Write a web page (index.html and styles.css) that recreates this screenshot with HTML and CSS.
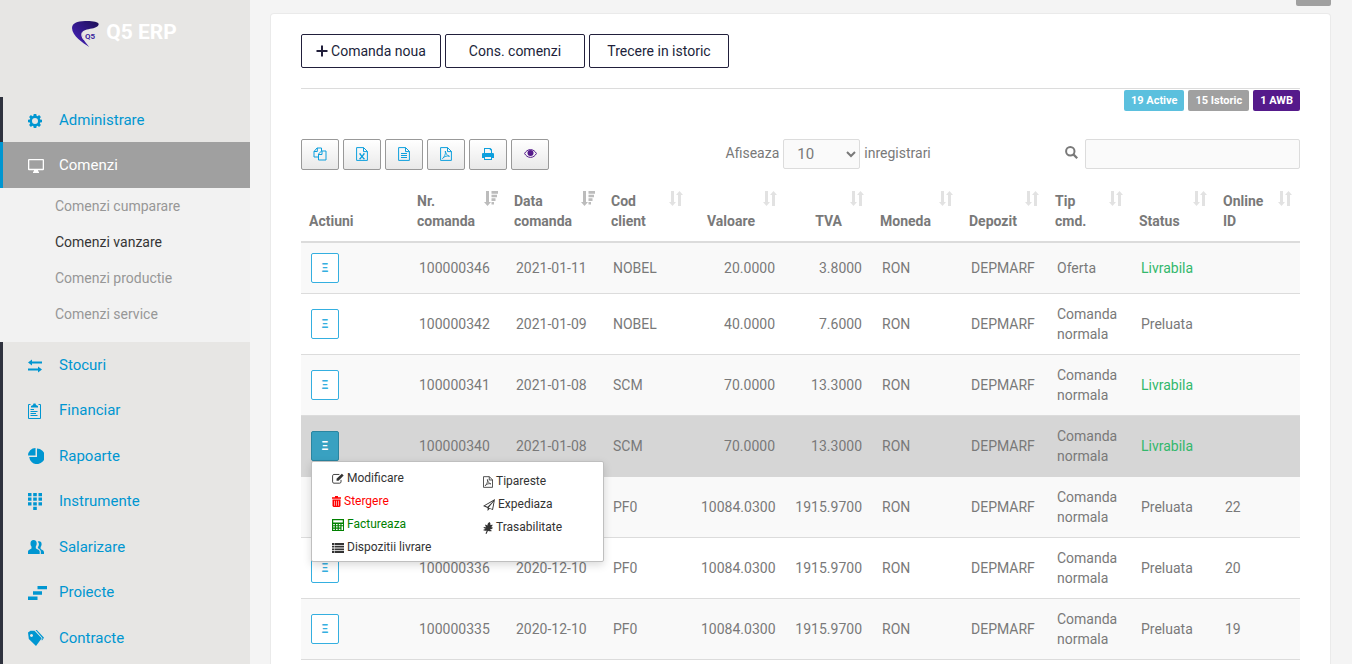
FILE: index.html
```
<!DOCTYPE html>
<html lang="ro">
<head>
    <meta charset="UTF-8">
    <meta name="viewport" content="width=device-width, initial-scale=1.0">
    <title>Q5 ERP</title>
    <link rel="stylesheet" href="styles.css">
</head>
<body>

    <!-- Icon set, used below with <use> -->
    <svg class="icon-set" width="0" height="0" aria-hidden="true">
        <symbol id="i-cog" viewBox="0 0 14 14"><path fill-rule="evenodd" d="M5.700 0h2.600l.3 1.800 1 .4 1.500-1.100 1.800 1.800-1.100 1.500.4 1 1.800.3v2.600l-1.800.3-.4 1 1.100 1.500-1.800 1.800-1.500-1.100-1 .4L8.300 14H5.700l-.3-1.800-1-.4-1.500 1.100-1.800-1.800 1.100-1.500-.4-1L0 8.300V5.700l1.800-.3.4-1L1.100 2.900l1.800-1.800 1.500 1.100 1-.4zM7 4a3 3 0 1 0 0 6 3 3 0 0 0 0-6z"/></symbol>
        <symbol id="i-display" viewBox="0 0 16 14"><path fill-rule="evenodd" d="M1 0h14a1 1 0 0 1 1 1v9.200a1 1 0 0 1-1 1h-5V12l1 1v1H5v-1l1-1v-.8H1a1 1 0 0 1-1-1V1a1 1 0 0 1 1-1zm.3 1.200v8.600h13.400V1.200z"/></symbol>
        <symbol id="i-transfer" viewBox="0 0 14 14"><path d="M0 3.500L4 .5v2h10v2H4v2zM14 10.500l-4-3v2H0v2h10v2z"/></symbol>
        <symbol id="i-paste" viewBox="0 0 13 16"><path d="M2.500 1.500h-2v14h12v-14h-2" fill="none" stroke="currentColor"/><path d="M3 4.500V3l2-1 .5-1.500h2L8 2l2 1v1.500zM2.500 6H6v.9H2.500zM2.500 8h7v.9h-7zM2.500 10h5.500v.9H2.500zM2.500 12h7v.9h-7z"/></symbol>
        <symbol id="i-pie" viewBox="0 0 16 16"><path d="M7.500 0v7.500H0A7.500 7.500 0 0 1 7.500 0zM9 .5A7.800 7.800 0 1 1 1.200 9H9z"/></symbol>
        <symbol id="i-keypad" viewBox="0 0 14 17"><path d="M0 0h3.500v3.300H0zM5.200 0h3.600v3.300H5.200zM10.500 0H14v3.300h-3.500zM0 4.600h3.500v3.200H0zM5.200 4.600h3.600v3.200H5.200zM10.500 4.600H14v3.200h-3.500zM0 9.200h3.500v3.300H0zM5.200 9.200h3.600v3.300H5.200zM10.500 9.200H14v3.300h-3.500zM5.200 13.800h3.600V17H5.200z"/></symbol>
        <symbol id="i-users" viewBox="0 0 16 14"><path d="M5.500 0C7.600 0 9 1.500 8.700 4c-.1 1.300-.6 2-.9 2.500v1.800c.8 1 3.700 1.300 3.900 3.200V14H0v-2c0-2.200 2.800-2.600 3.500-3.700V6.500C2.800 5.700 2.500 4.800 2.500 3.500 2.400 1.300 3.600 0 5.500 0zM9.700 1.700c2-1.200 4.100.2 3.900 2.700-.1 1.200-.5 2-1 2.500v1.800c.7 1 3.200 1.200 3.400 3.200V14h-3.200v-2.600c-.3-1.700-1.600-2.300-2.900-3.100V7c.6-.8 1-1.700 1-3.100 0-.9-.5-1.700-1.200-2.200z"/></symbol>
        <symbol id="i-steps" viewBox="0 0 19 14"><path d="M9.500 0H19v3.300H9.500zM5 5.300h9v3.400H5zM0 10.600h9.500V14H0z"/></symbol>
        <symbol id="i-tags" viewBox="0 0 16 16"><path fill-rule="evenodd" d="M0 2.500L2.500.8 6.500.7l7.200 7.500L8 16 .8 9zM3.500 4a1.500 1.500 0 1 0 .01 0zM7.500 0h1.300L16 7.800l-2 2.700-.6-.7 1.200-1.600z"/></symbol>
        <symbol id="i-plus" viewBox="0 0 12 12"><path d="M5 .5h2V5h4.500v2H7v4.500H5V7H.5V5H5z"/></symbol>
        <symbol id="i-copy" viewBox="0 0 14 14"><g fill="none" stroke="currentColor"><path d="M5.500 10H1V4.500L4 1h4.500v3M4.300 1v3.500H1M5.500 13V7l3-3H13v9zM9 4v3.500H5.500"/></g></symbol>
        <symbol id="i-excel" viewBox="0 0 12 14"><g fill="none" stroke="currentColor"><path d="M.6.6h7l3.800 3.800v9H.6zM7.500.6v4h4"/><path stroke-width="1.300" d="M4 7l4 4.800M8 7l-4 4.800"/><path stroke-width=".8" d="M3 6.800h2M7 6.800h2M3 11.800h2M7 11.800h2"/></g></symbol>
        <symbol id="i-doc" viewBox="0 0 12 14"><path fill="none" stroke="currentColor" d="M.6.6h7l3.800 3.800v9H.6zM7.500.6v4h4M3 6.500h6M3 8.500h6M3 10.500h6"/></symbol>
        <symbol id="i-pdf" viewBox="0 0 12 14"><g fill="none" stroke="currentColor"><path d="M.6.6h7l3.800 3.800v9H.6zM7.500.6v4h4"/><path stroke-width=".9" d="M5.300 4c.7 2.500 1.200 4.300 4.200 5.300C7 8.500 4.800 9.200 2.500 11.500 4.300 10 6 7 5.300 4z"/></g></symbol>
        <symbol id="i-print" viewBox="0 0 12 12"><path fill-rule="evenodd" d="M2 0h6.500L10 1.500V5h.8c.7 0 1.200.5 1.200 1.200V10h-2v2H2v-2H0V6.200C0 5.500.5 5 1.200 5H2zm1 1v4h6V2.200H7.800V1zM3 9v2h6V9z"/></symbol>
        <symbol id="i-eye" viewBox="0 0 13 9"><path d="M.6 4.500C1.800 2.200 3.900.6 6.500.6s4.700 1.600 5.900 3.900c-1.200 2.300-3.300 3.900-5.900 3.900S1.800 6.800.6 4.500z" fill="none" stroke="currentColor"/><circle cx="6.500" cy="3.900" r="3"/></symbol>
        <symbol id="i-search" viewBox="0 0 13 13"><circle cx="5.300" cy="5.300" r="4.200" fill="none" stroke="currentColor" stroke-width="2"/><path d="M8.400 8.400l3.800 3.800" fill="none" stroke="currentColor" stroke-width="2.200"/></symbol>
        <symbol id="i-sort" viewBox="0 0 14 15"><path d="M2 0h3v11h2l-3.500 4L0 11h2zM9 15h3V4h2l-3.500-4L7 4h2z"/></symbol>
        <symbol id="i-sorted" viewBox="0 0 14 15"><path d="M2 0h3v11h2l-3.500 4L0 11h2zM7.500 0H14v2.700H7.500zM7.500 3.700H13v2.600H7.500zM7.500 7.300h4v2.600h-4zM7.500 11H10v2.600H7.500z"/></symbol>
        <symbol id="i-edit" viewBox="0 0 13 12"><path d="M9.800 7.500v2.200c0 .8-.6 1.400-1.400 1.400H2c-.8 0-1.400-.6-1.400-1.400V3c0-.8.6-1.400 1.400-1.400h6" fill="none" stroke="currentColor"/><path d="M10.700.8l2 2-5.600 5.600H4.900V6.400z"/></symbol>
        <symbol id="i-trash" viewBox="0 0 9 11"><path fill-rule="evenodd" d="M3 0h3v1.300h3v1.500H0V1.300h3zM.5 3.500h8V10l-1 1h-6l-1-1zm1.700 1.200v5h.6v-5zm2 0v5h.6v-5zm2 0v5h.6v-5z"/></symbol>
        <symbol id="i-calc" viewBox="0 0 12 12"><path fill-rule="evenodd" d="M0 0h12v12H0zm1.200 1.200v2.300h9.600V1.200zM1.200 5v1.300h1.600V5zM4 5v1.300h1.600V5zm2.800 0v1.300h1.600V5zm2.700 0v1.300h1.500V5zM1.200 7.300v1.300h1.600V7.300zM4 7.300v1.300h1.600V7.300zm2.800 0v1.300h1.600V7.300zM1.200 9.700V11h1.600V9.700zM4 9.700V11h1.600V9.700zm2.800 0V11h1.600V9.700zM9.500 7.300V11H11V7.300z"/></symbol>
        <symbol id="i-list" viewBox="0 0 12 10"><path d="M0 0h2v1.900H0zM2.500 0H12v1.900H2.500zM0 2.700h2v1.900H0zM2.500 2.700H12v1.900H2.500zM0 5.400h2v1.900H0zM2.500 5.400H12v1.900H2.500zM0 8.100h2V10H0zM2.500 8.100H12V10H2.500z"/></symbol>
        <symbol id="i-plane" viewBox="0 0 12 12"><path fill-rule="evenodd" d="M12 0l-2 11-3.300-1.300L4.600 12V8.900L0 7zM10.300 2L2 6.800l2.600 1zM10.700 2.500L5.600 8.700l3.600 1.300z"/></symbol>
        <symbol id="i-tree" viewBox="0 0 10 12"><path d="M6.500 0c1 1 1.200 2 .8 3l2.400-.3C9.400 4 8.800 4.700 8 5l2 .8C9 7 8 7.500 6.800 7.300L9 9c-1.500.6-3 .4-4-.3L3.500 12l-1-.5 1.300-3C2.500 9 1 8.800 0 8l2.700-1.200C1.500 6.500.7 6 .5 5l2.700.2C2.500 4.500 2 3.500 2.300 2.500l2.200 1C4.300 2 5 .8 6.500 0z"/></symbol>
    </svg>

    <div class="layout">
        <aside class="sidebar">
            <a href="#" class="brand">
                <svg class="brand-logo" width="27" height="26" viewBox="0 0 27 26" role="img" aria-label="Q5">
                    <defs>
                        <linearGradient id="swoosh" x1="1" y1="0" x2="0" y2="1">
                            <stop offset="0" stop-color="#1d1055"/>
                            <stop offset="1" stop-color="#4a22c4"/>
                        </linearGradient>
                    </defs>
                    <path fill="url(#swoosh)" d="M0 7C.3 2 5 .2 13 0c6 0 12 .6 13.500 2.500.8 2-2 4-6.500 5-5 1-9 1.800-9.800 4-.7 2 .3 5.200 3 9.500l4 5C11 22 .2 15 0 7z"/>
                    <path fill="#e7e6e4" d="M10.700 18c-1.800-3-1.900-5.500-.3-7.500-.5 2.500 0 5 2.200 9z"/>
                    <text class="brand-mark" x="13" y="18">Q5</text>
                </svg>
                <span>Q5 ERP</span>
            </a>

            <nav>
                <ul class="menu">
                    <li><a href="#"><svg width="14" height="14"><use href="#i-cog"/></svg>Administrare</a></li>
                    <li class="active">
                        <a href="#"><svg width="16" height="14"><use href="#i-display"/></svg>Comenzi</a>
                        <ul class="submenu">
                            <li><a href="#">Comenzi cumparare</a></li>
                            <li><a href="#" class="current">Comenzi vanzare</a></li>
                            <li><a href="#">Comenzi productie</a></li>
                            <li><a href="#">Comenzi service</a></li>
                        </ul>
                    </li>
                    <li><a href="#"><svg width="14" height="14"><use href="#i-transfer"/></svg>Stocuri</a></li>
                    <li><a href="#"><svg width="13" height="16"><use href="#i-paste"/></svg>Financiar</a></li>
                    <li><a href="#"><svg width="16" height="16"><use href="#i-pie"/></svg>Rapoarte</a></li>
                    <li><a href="#"><svg width="14" height="17"><use href="#i-keypad"/></svg>Instrumente</a></li>
                    <li><a href="#"><svg width="16" height="14"><use href="#i-users"/></svg>Salarizare</a></li>
                    <li><a href="#"><svg width="19" height="14"><use href="#i-steps"/></svg>Proiecte</a></li>
                    <li><a href="#"><svg width="16" height="16"><use href="#i-tags"/></svg>Contracte</a></li>
                </ul>
            </nav>
        </aside>

        <main class="content">
            <div class="top-strip"><button type="button" class="tab" aria-label="Setari"></button></div>

            <section class="card">
                <div class="actions">
                    <button type="button" class="btn-dark"><svg width="12" height="12"><use href="#i-plus"/></svg>Comanda noua</button>
                    <button type="button" class="btn-dark">Cons. comenzi</button>
                    <button type="button" class="btn-dark">Trecere in istoric</button>
                </div>

                <div class="badges">
                    <span class="badge active-orders">19 Active</span>
                    <span class="badge history">15 Istoric</span>
                    <span class="badge awb">1 AWB</span>
                </div>

                <div class="toolbar">
                    <div class="export">
                        <button type="button" aria-label="Copiaza"><svg width="14" height="14"><use href="#i-copy"/></svg></button>
                        <button type="button" aria-label="Excel"><svg width="12" height="14"><use href="#i-excel"/></svg></button>
                        <button type="button" aria-label="CSV"><svg width="12" height="14"><use href="#i-doc"/></svg></button>
                        <button type="button" aria-label="PDF"><svg width="12" height="14"><use href="#i-pdf"/></svg></button>
                        <button type="button" aria-label="Tipareste"><svg width="12" height="12"><use href="#i-print"/></svg></button>
                        <button type="button" class="visibility" aria-label="Coloane"><svg width="13" height="9"><use href="#i-eye"/></svg></button>
                    </div>
                    <label class="length">Afiseaza
                        <select>
                            <option>10</option>
                            <option>25</option>
                            <option>50</option>
                        </select>
                        inregistrari
                    </label>
                    <div class="search">
                        <label for="search" aria-label="Cauta"><svg width="13" height="13"><use href="#i-search"/></svg></label>
                        <input type="search" id="search">
                    </div>
                </div>

                <table>
                    <colgroup>
                        <col class="c-actions"><col class="c-nr"><col class="c-date"><col class="c-client"><col class="c-value"><col class="c-tva">
                        <col class="c-currency"><col class="c-depot"><col class="c-type"><col class="c-status"><col class="c-online">
                    </colgroup>
                    <thead>
                        <tr>
                            <th>Actiuni</th>
                            <th>Nr. comanda<svg class="sorted" width="14" height="15"><use href="#i-sorted"/></svg></th>
                            <th>Data comanda<svg class="sorted" width="14" height="15"><use href="#i-sorted"/></svg></th>
                            <th>Cod client<svg width="14" height="15"><use href="#i-sort"/></svg></th>
                            <th class="num">Valoare<svg width="14" height="15"><use href="#i-sort"/></svg></th>
                            <th class="num">TVA<svg width="14" height="15"><use href="#i-sort"/></svg></th>
                            <th>Moneda<svg width="14" height="15"><use href="#i-sort"/></svg></th>
                            <th>Depozit<svg width="14" height="15"><use href="#i-sort"/></svg></th>
                            <th>Tip cmd.<svg width="14" height="15"><use href="#i-sort"/></svg></th>
                            <th>Status<svg width="14" height="15"><use href="#i-sort"/></svg></th>
                            <th>Online ID<svg width="14" height="15"><use href="#i-sort"/></svg></th>
                        </tr>
                    </thead>
                    <tbody>
                        <tr>
                            <td><button type="button" class="row-btn">Ξ</button></td>
                            <td>100000346</td><td>2021-01-11</td><td>NOBEL</td>
                            <td class="num">20.0000</td><td class="num">3.8000</td>
                            <td>RON</td><td>DEPMARF</td><td>Oferta</td><td class="ready">Livrabila</td><td></td>
                        </tr>
                        <tr>
                            <td><button type="button" class="row-btn">Ξ</button></td>
                            <td>100000342</td><td>2021-01-09</td><td>NOBEL</td>
                            <td class="num">40.0000</td><td class="num">7.6000</td>
                            <td>RON</td><td>DEPMARF</td><td>Comanda normala</td><td>Preluata</td><td></td>
                        </tr>
                        <tr>
                            <td><button type="button" class="row-btn">Ξ</button></td>
                            <td>100000341</td><td>2021-01-08</td><td>SCM</td>
                            <td class="num">70.0000</td><td class="num">13.3000</td>
                            <td>RON</td><td>DEPMARF</td><td>Comanda normala</td><td class="ready">Livrabila</td><td></td>
                        </tr>
                        <tr class="selected">
                            <td>
                                <div class="dropdown">
                                    <button type="button" class="row-btn open" aria-expanded="true">Ξ</button>
                                    <div class="dropdown-menu">
                                        <ul>
                                            <li><a href="#"><svg width="12" height="11"><use href="#i-edit"/></svg>Modificare</a></li>
                                            <li><a href="#" class="delete"><svg width="9" height="11"><use href="#i-trash"/></svg>Stergere</a></li>
                                            <li><a href="#" class="invoice"><svg width="12" height="12"><use href="#i-calc"/></svg>Factureaza</a></li>
                                            <li><a href="#"><svg width="12" height="10"><use href="#i-list"/></svg>Dispozitii livrare</a></li>
                                        </ul>
                                        <ul>
                                            <li><a href="#"><svg width="10" height="12"><use href="#i-pdf"/></svg>Tipareste</a></li>
                                            <li><a href="#"><svg width="12" height="12"><use href="#i-plane"/></svg>Expediaza</a></li>
                                            <li><a href="#"><svg width="10" height="12"><use href="#i-tree"/></svg>Trasabilitate</a></li>
                                        </ul>
                                    </div>
                                </div>
                            </td>
                            <td>100000340</td><td>2021-01-08</td><td>SCM</td>
                            <td class="num">70.0000</td><td class="num">13.3000</td>
                            <td>RON</td><td>DEPMARF</td><td>Comanda normala</td><td class="ready">Livrabila</td><td></td>
                        </tr>
                        <tr>
                            <td><button type="button" class="row-btn">Ξ</button></td>
                            <td></td><td></td><td>PF0</td>
                            <td class="num">10084.0300</td><td class="num">1915.9700</td>
                            <td>RON</td><td>DEPMARF</td><td>Comanda normala</td><td>Preluata</td><td>22</td>
                        </tr>
                        <tr>
                            <td><button type="button" class="row-btn">Ξ</button></td>
                            <td>100000336</td><td>2020-12-10</td><td>PF0</td>
                            <td class="num">10084.0300</td><td class="num">1915.9700</td>
                            <td>RON</td><td>DEPMARF</td><td>Comanda normala</td><td>Preluata</td><td>20</td>
                        </tr>
                        <tr>
                            <td><button type="button" class="row-btn">Ξ</button></td>
                            <td>100000335</td><td>2020-12-10</td><td>PF0</td>
                            <td class="num">10084.0300</td><td class="num">1915.9700</td>
                            <td>RON</td><td>DEPMARF</td><td>Comanda normala</td><td>Preluata</td><td>19</td>
                        </tr>
                    </tbody>
                </table>
            </section>
        </main>
    </div>

</body>
</html>
```
FILE: styles.css
```
* {
    box-sizing: border-box;
}
body {
    margin: 0;
    font-family: Roboto, Arial, sans-serif;
    font-size: 14px;
    line-height: 20px;
    color: #797979;
    background-color: #f4f4f4;
}
a {
    text-decoration: none;
    color: inherit;
}
ul {
    list-style: none;
    margin: 0;
    padding: 0;
}
button, input, select {
    font-family: inherit;
    color: inherit;
}
svg {
    fill: currentColor;
}
.icon-set {
    position: absolute;
}
.layout {
    display: flex;
    min-height: 100vh;
}

/* Sidebar */
.sidebar {
    flex: 0 0 250px;
    display: flex;
    flex-direction: column;
    background-color: #e7e6e4;
}
.brand {
    display: flex;
    justify-content: center;
    gap: 7px;
    height: 97px;
    padding: 21px 1px 0 0;
    color: #fff;
    font-size: 21px;
    font-weight: 700;
    line-height: 22px;
}
.brand-mark {
    font-size: 8px;
    font-weight: 700;
    fill: #3a1f9c;
}
.sidebar nav {
    flex: 1;
    border-left: 3px solid #2f323e;
}
.menu > li > a {
    display: grid;
    grid-template-columns: 31px 1fr;
    align-items: center;
    padding: 13px 25px 11px;
    color: #0096d1;
    font-size: 15px;
    line-height: 1.43;
}
.menu > li.active {
    margin-left: -3px;
}
.menu > li.active > a {
    background-color: #a0a0a0;
    border-left: 3px solid #0096d1;
    color: #fff;
}
.submenu {
    background-color: #f2f2f2;
    padding-bottom: 10px;
}
.submenu a {
    display: block;
    padding: 8px 20px 8px 55px;
    color: #979797;
}
.submenu a.current {
    color: #353535;
}

/* Content */
.content {
    flex: 1;
    display: flex;
    flex-direction: column;
    min-width: 0;
    padding: 0 21px 0 20px;
}
.top-strip {
    display: flex;
    justify-content: flex-end;
    height: 13px;
}
.tab {
    width: 35px;
    height: 6px;
    padding: 0;
    border: none;
    border-radius: 0 0 2px 2px;
    background-color: #a0a0a0;
}
.card {
    flex: 1;
    padding: 20px 30px 0;
    background-color: #fff;
    border: 1px solid #eaeaea;
    border-bottom: none;
    border-radius: 4px 4px 0 0;
}
.actions {
    display: flex;
    gap: 4px;
    padding-bottom: 20px;
    border-bottom: 1px solid #dcdcdc;
}
.btn-dark {
    display: flex;
    align-items: center;
    justify-content: center;
    gap: 3px;
    width: 140px;
    height: 34px;
    border: 1px solid #211f3b;
    border-radius: 2px;
    background-color: #fff;
    color: #211f3b;
    font-size: 14px;
}
.badges {
    display: flex;
    justify-content: flex-end;
    gap: 4px;
    margin-top: 1px;
}
.badge {
    padding: 0 7px;
    border-radius: 2px;
    color: #fff;
    font-size: 11px;
    font-weight: 700;
    line-height: 21px;
}
.active-orders {
    background-color: #5bc0de;
}
.history {
    background-color: #a0a0a0;
}
.awb {
    background-color: #551a8b;
}

/* Toolbar above the table */
.toolbar {
    display: grid;
    grid-template-columns: 42% auto 1fr;
    gap: 5px;
    margin-top: 28px;
}
.export {
    display: flex;
    gap: 4px;
}
.export button {
    display: flex;
    align-items: center;
    justify-content: center;
    width: 38px;
    height: 31px;
    padding: 0 0 2px;
    border: 1px solid #999;
    border-radius: 2px;
    background: linear-gradient(#fff, #e9e9e9);
    color: #0d9fdd;
}
.export .visibility {
    color: #551a8b;
}
.length {
    display: flex;
    gap: 4px;
    line-height: 28px;
}
select {
    width: 77px;
    height: 30px;
    padding: 0 9px;
    border: 1px solid #dcdcdc;
    border-radius: 2px;
    background-color: #fafafa;
    font-size: 15px;
}
.search {
    display: flex;
    justify-content: flex-end;
    gap: 7px;
}
.search label {
    padding-top: 5px;
}
.search input {
    width: 215px;
    height: 30px;
    border: 1px solid #dcdcdc;
    border-radius: 2px;
    background-color: #fafafa;
}

/* Orders table */
table {
    width: 100%;
    margin-top: 11px;
    table-layout: fixed;
    border-collapse: separate;
    border-spacing: 0;
}
.c-actions { width: 108px; }
.c-nr, .c-date { width: 97px; }
.c-client { width: 88px; }
.c-value { width: 94px; }
.c-tva { width: 87px; }
.c-currency { width: 89px; }
.c-depot { width: 86px; }
.c-type, .c-status { width: 84px; }
.c-online { width: 85px; }
th {
    position: relative;
    padding: 10px 30px 10px 8px;
    border-bottom: 2px solid #dcdcdc;
    text-align: left;
    vertical-align: bottom;
    font-weight: 700;
}
th svg {
    position: absolute;
    top: 10px;
    right: 8px;
    color: #e2e2e2;
}
th svg.sorted {
    color: #bcbcbc;
}
td {
    padding: 10px;
    border-bottom: 1px solid #dcdcdc;
    vertical-align: middle;
}
.num {
    text-align: right;
}
tbody tr:nth-child(odd) {
    background-color: #f9f9f9;
}
tbody tr.selected {
    background-color: #d6d6d6;
}
.selected td {
    border-bottom-color: #d6d6d6;
}
.ready {
    color: #33b86c;
}
.row-btn {
    display: block;
    width: 28px;
    height: 30px;
    padding: 0;
    border: 1px solid #34afe0;
    border-radius: 2px;
    background-color: #fff;
    color: #34afe0;
    font-size: 12px;
    font-weight: 700;
}
.row-btn.open {
    background-color: #39a1c1;
    border-color: #2a85a0;
    color: #fff;
}

/* Row menu */
.dropdown {
    position: relative;
}
.dropdown-menu {
    position: absolute;
    top: 100%;
    left: 0;
    z-index: 10;
    display: grid;
    grid-template-columns: 151px 1fr;
    width: 293px;
    padding: 5px 0 2px 20px;
    background-color: #fff;
    border: 1px solid #bfbfbf;
    border-radius: 2px;
    box-shadow: 0 3px 8px rgba(0, 0, 0, 0.15);
    color: #333;
    font-size: 12px;
    line-height: 23px;
}
.dropdown-menu ul + ul {
    padding-top: 3px;
}
.dropdown-menu a {
    display: flex;
    align-items: center;
    gap: 3px;
}
.dropdown-menu .delete {
    color: #f00;
}
.dropdown-menu .invoice {
    color: #008000;
}
```
